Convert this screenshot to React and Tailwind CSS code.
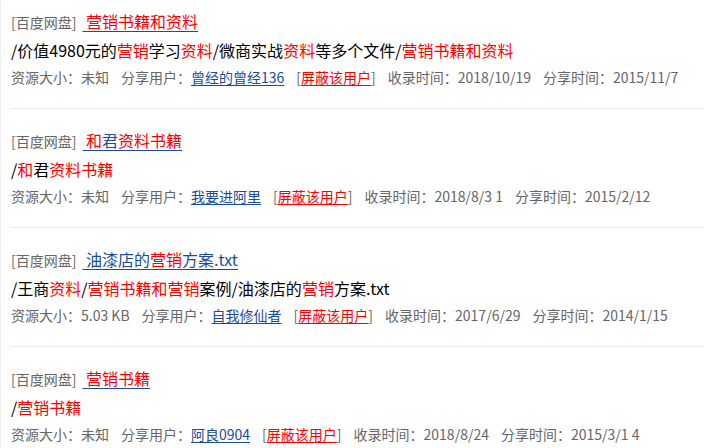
const items = [
    {
        title: '{营销书籍和资料}',
        desc: '/价值4980元的{营销}学习{资料}/微商实战{资料}等多个文件/{营销书籍和资料}',
        size: '未知',
        user: '曾经的曾经136',
        added: '2018/10/19',
        shared: '2015/11/7',
    },
    {
        title: '{和}君{资料书籍}',
        desc: '/{和}君{资料书籍}',
        size: '未知',
        user: '我要进阿里',
        added: '2018/8/3 1',
        shared: '2015/2/12',
    },
    {
        title: '油漆店的{营销}方案.txt',
        desc: '/王商{资料}/{营销书籍和营销}案例/油漆店的{营销}方案.txt',
        size: '5.03 KB',
        user: '自我修仙者',
        added: '2017/6/29',
        shared: '2014/1/15',
    },
    {
        title: '{营销书籍}',
        desc: '/{营销书籍}',
        size: '未知',
        user: '阿良0904',
        added: '2018/8/24',
        shared: '2015/3/1 4',
    },
]

// "{word}" marks a highlighted keyword
const Highlight = ({ text }) =>
    text.split(/(\{[^}]+\})/).filter(Boolean).map((part, idx) =>
        part.startsWith('{')
            ? <span key={idx} className="text-[#ff0000]">{part.slice(1, -1)}</span>
            : <span key={idx}>{part}</span>
    )

const Item = ({ item, first }) => (
    <div className={`border-b border-[#ebebeb] pb-[21px] ${first ? 'pt-[9px]' : 'pt-[19px]'}`}>
        <div className="h-[24px] leading-[24px] whitespace-nowrap">
            <span className="text-[14px] text-[#666]">[百度网盘]</span>
            <span className="inline-block w-[6px]" />
            <a href="#" className="text-[16px] text-[#1a4b9c] underline underline-offset-[3px] decoration-[#1a4b9c]">
                {'\u00a0'}<Highlight text={item.title} />
            </a>
        </div>
        <div className="mt-[5px] h-[24px] leading-[24px] text-[16px] text-black whitespace-nowrap">
            <Highlight text={item.desc} />
        </div>
        <div className="mt-[5px] h-[20px] leading-[20px] text-[14px] text-[#666] whitespace-nowrap flex gap-[12px]">
            <span>资源大小：{item.size}</span>
            <span>
                分享用户：<a href="#" className="text-[#1a4b9c] underline underline-offset-2">{item.user}</a>
            </span>
            <span>
                [<a href="#" className="text-[#ff0000] underline underline-offset-2">屏蔽该用户</a>]
            </span>
            <span>收录时间：{item.added}</span>
            <span>分享时间：{item.shared}</span>
        </div>
    </div>
)

export default function App() {
    return (
        <div
            className="h-[448px] w-[704px] overflow-hidden bg-white border-l border-[#f0f0f0] pl-[10px]"
            style={{ fontFamily: '"Noto Sans CJK SC", "Noto Sans", sans-serif' }}
        >
            {items.map((item, idx) => (
                <Item key={idx} item={item} first={idx === 0} />
            ))}
        </div>
    )
}
